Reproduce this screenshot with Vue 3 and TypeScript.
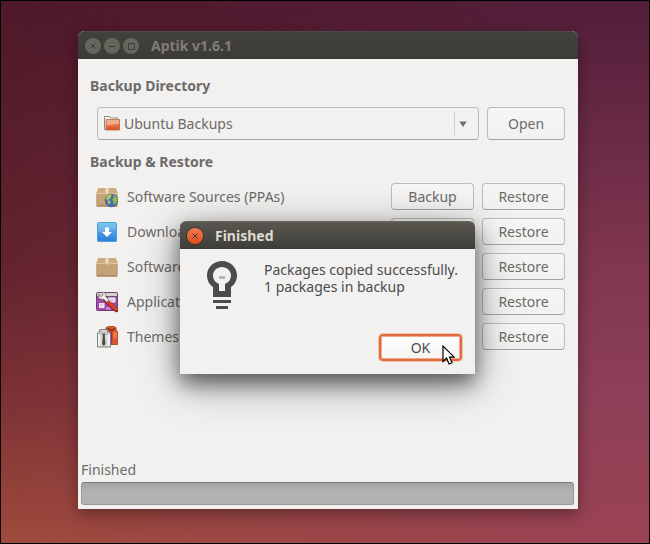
<script setup lang="ts">
import { ref } from 'vue'

type IconName = 'sources' | 'download' | 'package' | 'settings' | 'themes'

interface BackupItem {
  icon: IconName
  label: string
}

const items: BackupItem[] = [
  { icon: 'sources', label: 'Software Sources (PPAs)' },
  { icon: 'download', label: 'Downloads' },
  { icon: 'package', label: 'Software' },
  { icon: 'settings', label: 'Applications' },
  { icon: 'themes', label: 'Themes' },
]

const directory = ref('Ubuntu Backups')
const dialogOpen = ref(true)
</script>

<template>
  <div class="desktop">
    <main class="window">
      <header class="titlebar inactive">
        <button class="control" type="button" aria-label="Close">
          <svg viewBox="0 0 16 16"><path d="M5.500 5.500l5 5m0-5l-5 5" /></svg>
        </button>
        <button class="control" type="button" aria-label="Minimize">
          <svg viewBox="0 0 16 16"><path d="M4.500 8.500h7" /></svg>
        </button>
        <button class="control" type="button" aria-label="Maximize">
          <svg viewBox="0 0 16 16"><path d="M5.500 5.500h6v6h-6z" /></svg>
        </button>
        <h1 class="title">Aptik v1.6.1</h1>
      </header>

      <div class="content">
        <h2 class="heading"><label for="directory">Backup Directory</label></h2>
        <div class="directory">
          <div class="combo">
            <svg class="folder" viewBox="0 0 16 15" aria-hidden="true">
              <path d="M.5 13.500V.500h5l1 1.500h7v11.500z" fill="#fafafa" stroke="#8b8884" />
              <path d="M2 3.500h13.500V14H2z" fill="url(#folder-fill)" stroke="#bd6340" stroke-width=".8" />
              <path d="M2.600 4.200h12.300v3.200c-5 .3-7 1.700-12.300 1.800z" fill="#f8c3a5" opacity=".65" />
              <defs>
                <linearGradient id="folder-fill" x2="0" y2="1">
                  <stop stop-color="#eea17b" /><stop offset="1" stop-color="#df4d1c" />
                </linearGradient>
              </defs>
            </svg>
            <select id="directory" v-model="directory">
              <option>Ubuntu Backups</option>
            </select>
            <span class="arrow" aria-hidden="true">
              <svg viewBox="0 0 8 6"><path d="M.3.500h7.400L4 6z" fill="#6f6e6c" /></svg>
            </span>
          </div>
          <button class="button open" type="button">Open</button>
        </div>

        <h2 class="heading">Backup &amp; Restore</h2>
        <ul class="items">
          <li v-for="item in items" :key="item.icon" class="item">
            <svg class="icon" viewBox="0 0 22 22" aria-hidden="true">
              <template v-if="item.icon === 'sources' || item.icon === 'package'">
                <path d="M2.500 2h17l2 5v13.500H.500V7z" fill="#c6a279" />
                <path d="M2.500 2h17l2 5H.500z" fill="#cdab80" />
                <path d="M.5 7.500h21" stroke="#e2c69e" />
                <path d="M1 20h20" stroke="#97744e" />
                <path d="M1 8v12M21 8v12" stroke="#b38f67" stroke-width=".8" />
                <path d="M9.500 2h3l.5 6H9z" fill="#ecd6b5" />
                <path d="M9 7.500v2h4v-2" fill="#d9bb93" stroke="#bd9971" stroke-width=".6" />
                <path d="M3 18h5" stroke="#a98460" stroke-dasharray="1 1" />
              </template>
              <template v-if="item.icon === 'sources'">
                <circle cx="15.500" cy="14.500" r="6.300" fill="#3f6fb8" stroke="#345581" stroke-width=".6" />
                <path d="M9.800 12.500c1-2.500 3-3.700 5-3.900l1 1.200-1.300 1.300.6 1.100-2 .9-.5 1.500 1.700.7.300 1.500-1.800 2-1.100-2.200.1-1.800z" fill="#a9c451" />
                <path d="M16.800 9.200c2.500.4 4.200 2.300 4.700 4.600l-1.200 3-1.500 1.800-1.300-1.100.2-2.300-1.500-1 .6-2 1.300-.7z" fill="#9dbb40" />
                <path d="M11.500 11c1-1.200 2.500-1.800 3.500-1.800" stroke="#d4df9a" stroke-width=".7" fill="none" />
              </template>
              <template v-if="item.icon === 'download'">
                <rect x="1.500" y="1.500" width="19" height="19" rx="1" fill="url(#download-fill)" stroke="#519fd9" />
                <path d="M2 11c6 1 11-1 18-3V2H2z" fill="#fff" opacity=".16" />
                <path d="M9 6.500h4V11h3l-5 5-5-5h3z" fill="#fff" />
                <defs>
                  <linearGradient id="download-fill" x2="0" y2="1">
                    <stop stop-color="#61bdf0" /><stop offset="1" stop-color="#2e7dd8" />
                  </linearGradient>
                </defs>
              </template>
              <template v-if="item.icon === 'settings'">
                <rect x=".5" y="1.500" width="21" height="18" rx="1" fill="#a348a8" stroke="#6f4073" />
                <path d="M1 2h20v3H1z" fill="#d8d4c8" />
                <path d="M1 5.500h20" stroke="#6c5367" />
                <path d="M12 6.500h7.500v5H12zM3 12h5.500v5H3z" fill="#efe5ef" />
                <path d="M4 14h3m7-5h4" stroke="#c3aac5" />
                <path d="M10 17.500h4" stroke="#d59bd7" stroke-width="2" />
                <path d="M10 9.500l10.300 9.500" stroke="#8f211b" stroke-width="4.400" stroke-linecap="round" />
                <path d="M10.200 9.200l10 9.200" stroke="#d9452f" stroke-width="2.800" stroke-linecap="round" />
                <path d="M2.500 3c-.7 2.500.3 5 3.200 5.300l1.800-.2L10.800 11 13 9 9.800 6C10.200 3 8.500 1 5.700 1l1.500 2.700-1.300 1.600-2.200-.2z" fill="#f4f4f0" stroke="#777570" stroke-width=".8" />
              </template>
              <template v-if="item.icon === 'themes'">
                <path d="M10 4V1.500L13 .500h5l2 1.200V4l1.500 1.500v13H10z" fill="#dc5928" stroke="#a63d18" stroke-width=".8" />
                <path d="M11.500 2.200c2 2.700 5 2.700 7.500 0" fill="none" stroke="#832b13" stroke-width="1.300" />
                <path d="M13.500 6.500l2.800-1v12h-2.800z" fill="#a02983" />
                <path d="M17.500 6h3.200v6c-1 .7-2 1-3.200 1z" fill="#f08b50" opacity=".7" />
                <path d="M3.500 5.500V4l1.500-.5h5.500l1.500.5v1.500L14.500 7v14H1.500V7z" fill="#d8d8d5" stroke="#747370" stroke-width=".9" />
                <path d="M3.200 8.500V20m9.600-11.500V20" stroke="#fafafa" stroke-width="1.500" />
                <path d="M4 5l3.700 2.500L11.500 5v3L7.700 7.400 4 8z" fill="#fff" stroke="#858480" stroke-width=".7" />
                <path d="M6.600 8h2.500l-.4 2 .8 8-1.700 2-1.700-2 .8-8z" fill="#454844" />
              </template>
            </svg>
            <span class="label">{{ item.label }}</span>
            <button class="button" type="button">Backup</button>
            <button class="button" type="button">Restore</button>
          </li>
        </ul>
      </div>

      <footer class="status">
        <label for="progress">Finished</label>
        <progress id="progress" value="0" max="100"></progress>
      </footer>

      <section v-if="dialogOpen" class="dialog" role="dialog" aria-labelledby="dialog-title">
        <header class="titlebar">
          <button class="control close" type="button" aria-label="Close" @click="dialogOpen = false">
            <svg viewBox="0 0 16 16"><path d="M5.500 5.500l5 5m0-5l-5 5" /></svg>
          </button>
          <h2 id="dialog-title" class="title">Finished</h2>
        </header>
        <div class="dialog-body">
          <svg class="bulb" viewBox="0 0 30 48" aria-hidden="true">
            <path fill-rule="evenodd" d="M15 0C6.500 0 0 6.500 0 14.500c0 5 2.500 9.200 6 11.500v10h18V26c3.500-2.300 6-6.500 6-11.500C30 6.500 23.500 0 15 0zm0 6c5 0 9 3.800 9 8.500 0 4-2.500 7-6 8.500v7h-6v-7c-3.500-1.500-6-4.500-6-8.500C6 9.800 10 6 15 6z" fill="#4c4c4c" />
            <path d="M12 15h6v3h-6z" fill="#b4b4b4" />
            <path d="M6 39h18v3H6zm3 6h12v3H9z" fill="#4c4c4c" />
          </svg>
          <p class="message">Packages copied successfully.<br />1 packages in backup</p>
        </div>
        <div class="actions">
          <button class="button ok" type="button" @click="dialogOpen = false">OK</button>
        </div>
        <svg class="pointer" viewBox="0 0 13 20" aria-hidden="true">
          <path d="M1 1v15.500l3.600-3.400L7 19l3-1.300-2.500-5.500h4.700z" fill="#fff" stroke="#000" stroke-width="1.200" />
        </svg>
      </section>
    </main>
  </div>
</template>

<style>
body {
  margin: 0;
}
</style>

<style scoped>
* {
  box-sizing: border-box;
}

.desktop {
  position: relative;
  display: flex;
  min-height: 100vh;
  padding: 30px 71px 34px 77px;
  border: 1px solid #000;
  background: linear-gradient(#4e1929, #64242e 50%, #7f3335 75%, #a04b3c);
  color: #6c6b69;
  font: 14px/20px "Noto Sans", "Open Sans", sans-serif;
}

.desktop::before {
  position: absolute;
  inset: 0;
  background: linear-gradient(#521e3a, #80364f 48%, #8e4058 74%, #9b4353);
  mask-image: linear-gradient(90deg, transparent, #000 90%);
  content: "";
}

.window {
  position: relative;
  display: flex;
  flex: 1;
  flex-direction: column;
  min-width: 0;
  border-radius: 6px 6px 0 0;
  background: #f2f1f0;
  box-shadow: 0 5px 16px rgb(0 0 0 / 35%);
}

.titlebar {
  display: flex;
  align-items: center;
  gap: 3px;
  height: 28px;
  padding: 0 7px;
  border-top: 1px solid #66645c;
  border-radius: 6px 6px 0 0;
  background: linear-gradient(#59574f, #3e3d39);
  color: #dfdbd2;
}

.titlebar.inactive {
  border-top-color: #4b4a45;
  background: linear-gradient(#42413d, #3c3b37);
  color: #807d78;
}

.title {
  margin: 0 0 0 9px;
  font-size: 14px;
  line-height: 20px;
}

.control {
  width: 16px;
  height: 16px;
  padding: 0;
  border: 0;
  border-radius: 50%;
  background: #66665c;
}

.control svg {
  display: block;
  fill: none;
  stroke: #3c3b37;
}

.control.close {
  background: linear-gradient(#f37c52, #df4e1a);
  box-shadow: 0 0 0 1px #45342c;
}

.content {
  padding: 17px 13px 0 12px;
}

.heading {
  margin: 0 0 11px;
  font-size: 14px;
  line-height: 20px;
}

.directory {
  display: flex;
  gap: 8px;
  margin: 0 0 12px 7px;
}

.button {
  width: 83px;
  height: 27px;
  padding: 0;
  border: 1px solid #bcbbb9;
  border-bottom-color: #a5a4a2;
  border-radius: 4px;
  background: linear-gradient(rgb(255 255 255 / 35%), rgb(255 255 255 / 0%));
  color: inherit;
  font: inherit;
}

.combo {
  display: flex;
  flex: 1;
  align-items: center;
  height: 33px;
  padding: 0 6px;
  border: 1px solid #bcbbb9;
  border-bottom-color: #a5a4a2;
  border-radius: 4px;
}

.folder {
  width: 16px;
  height: 15px;
}

select {
  flex: 1;
  min-width: 0;
  padding: 0 4px;
  border: 0;
  appearance: none;
  background: none;
  color: inherit;
  font: inherit;
}

.arrow {
  display: flex;
  align-items: center;
  height: 23px;
  padding: 0 5px 0 4px;
  border-left: 1px solid #d0cfcd;
}

.arrow svg {
  width: 8px;
  height: 6px;
}

.open {
  width: 78px;
  height: 33px;
}

.items {
  display: flex;
  flex-direction: column;
  gap: 8px;
  margin: 0 0 0 6px;
  padding: 0;
  list-style: none;
}

.item {
  display: flex;
  align-items: center;
  gap: 8px;
}

.icon {
  flex: none;
  width: 22px;
  height: 22px;
}

.label {
  flex: 1;
  min-width: 0;
  overflow: hidden;
  padding-left: 1px;
  white-space: nowrap;
}

.status {
  display: flex;
  flex-direction: column;
  gap: 2px;
  margin-top: auto;
  padding: 0 4px 4px 3px;
}

progress {
  width: 100%;
  height: 23px;
  border: 1px solid #999;
  border-top-color: #7e7e7e;
  border-radius: 3px;
  appearance: none;
  background: linear-gradient(#a4a4a4, #b2b2b2 40%, #b2b2b2);
}

progress::-webkit-progress-bar {
  background: transparent;
}

.dialog {
  position: absolute;
  top: 190px;
  left: calc(50% - 148px);
  width: 295px;
  border-radius: 6px 6px 0 0;
  background: #f2f1f0;
  box-shadow: 0 9px 20px rgb(0 0 0 / 50%), 0 10px 44px rgb(0 0 0 / 35%);
  color: #4c4c4c;
}

.dialog-body {
  display: flex;
  gap: 27px;
  padding: 12px 12px 0 27px;
}

.bulb {
  flex: none;
  width: 30px;
  height: 48px;
}

.message {
  margin: 0;
  line-height: 17px;
  white-space: nowrap;
}

.actions {
  display: flex;
  justify-content: flex-end;
  padding: 25px 13px 13px;
}

.ok {
  height: 27px;
  border: 2px solid #df6b3f;
  background: linear-gradient(#fff, #f4f3f2);
  box-shadow: inset 0 0 0 1px #f0a888, 0 0 0 1px #f0c5b2;
}

.pointer {
  position: absolute;
  right: 20px;
  bottom: 9px;
  width: 13px;
  height: 20px;
}
</style>
